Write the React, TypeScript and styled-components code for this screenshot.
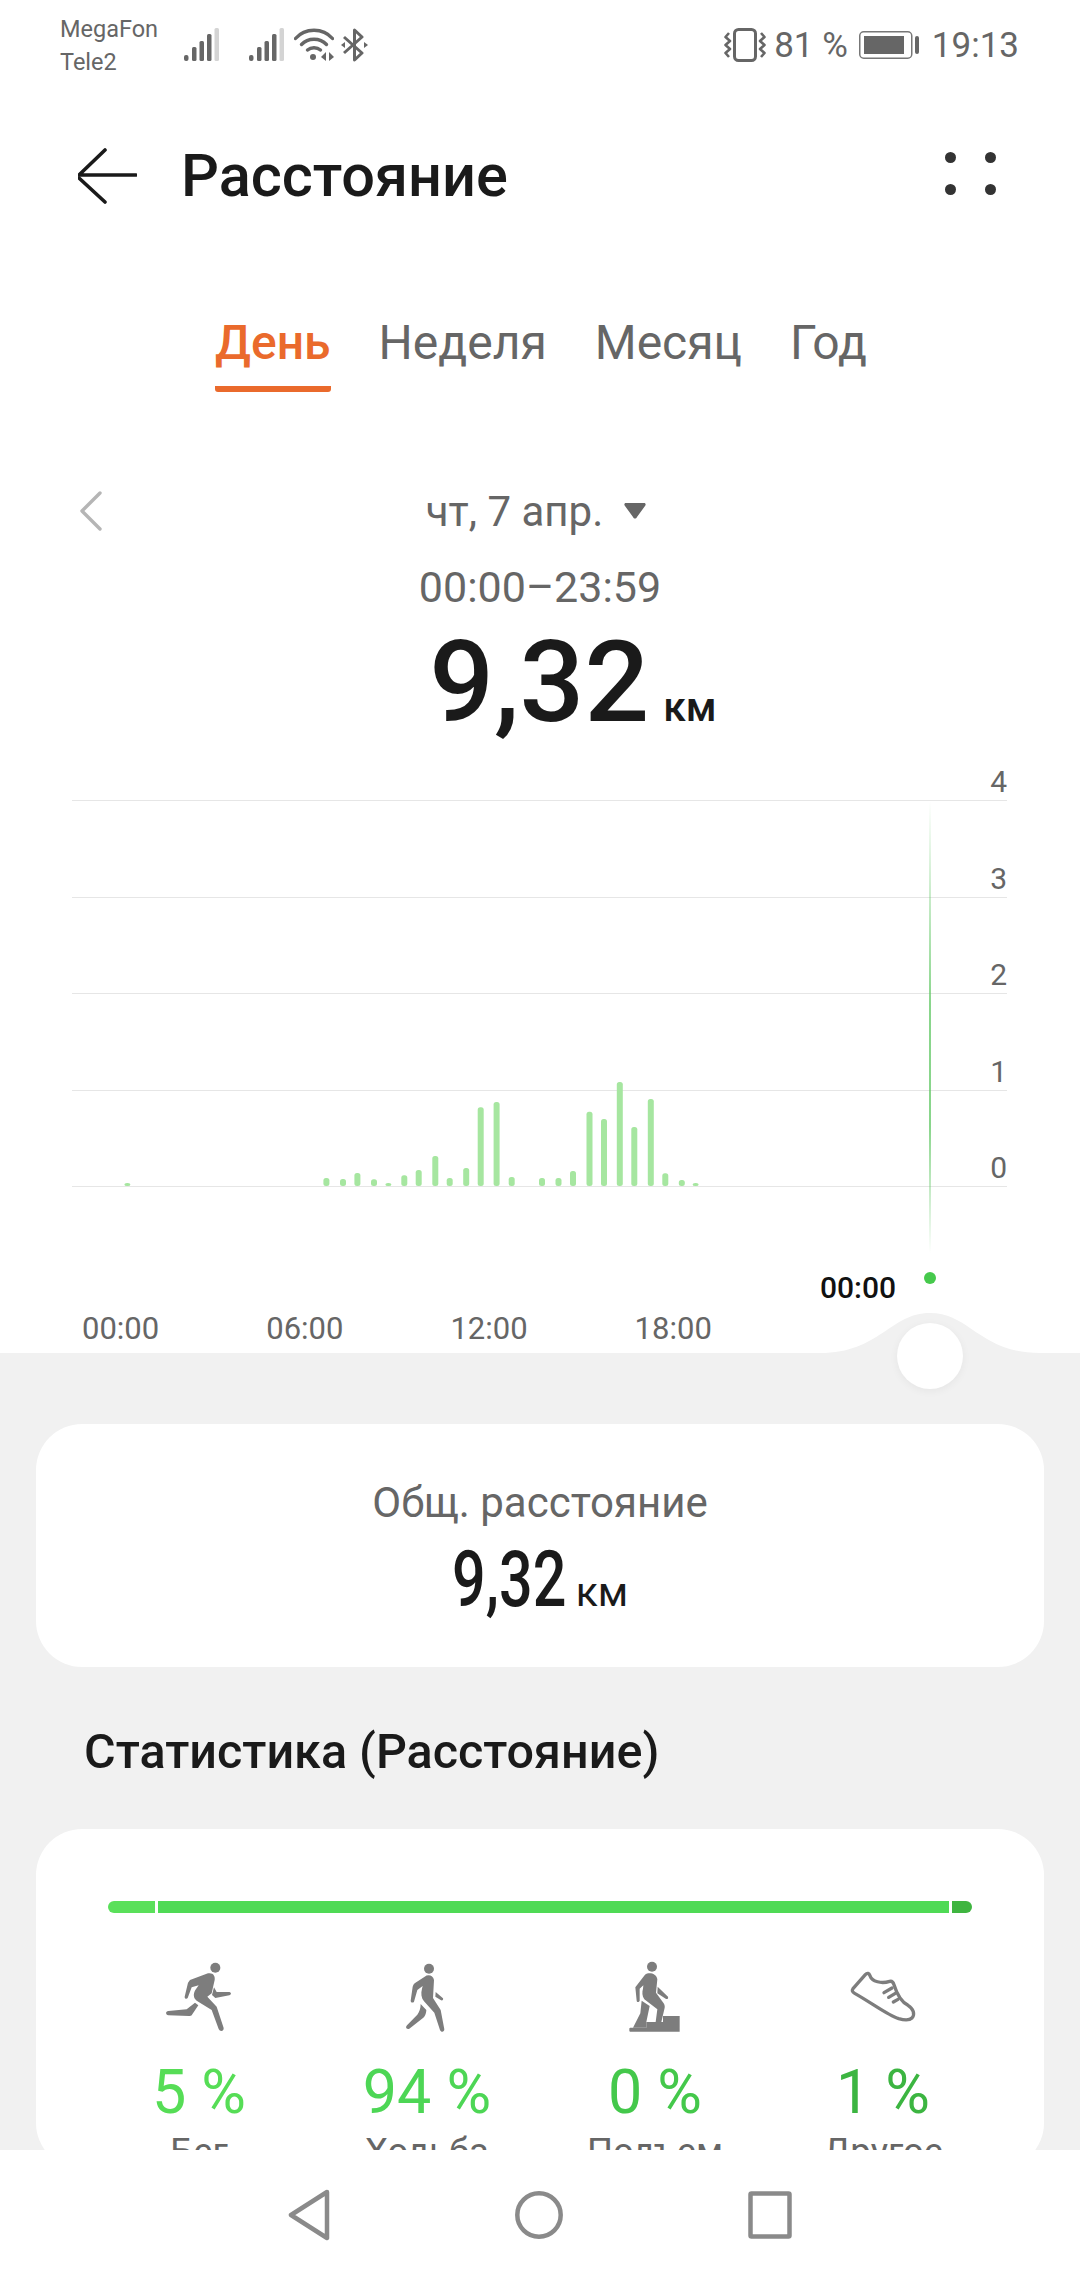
import React from 'react';
import styled, { createGlobalStyle } from 'styled-components';

const GlobalStyle = createGlobalStyle`
  html, body {
    margin: 0;
    padding: 0;
    background: #fff;
    font-family: Roboto, "Noto Sans", sans-serif;
  }
`;

const Screen = styled.div`
  width: 1080px;
  height: 2280px;
  display: flex;
  flex-direction: column;
  overflow: hidden;
  background: #f1f1f1;
`;

const Scroll = styled.div`
  flex: 1;
  min-height: 0;
  overflow: hidden;
`;

const Top = styled.div`
  position: relative;
  height: 1353px;
  background: #fff;
  display: flex;
  flex-direction: column;
`;

const StatusBar = styled.div`
  height: 84px;
  box-sizing: border-box;
  padding: 13px 61px 0 60px;
  display: flex;
  align-items: flex-start;
  color: #666;
`;

const Carrier = styled.div`
  width: 124px;
  font-size: 23.5px;
  line-height: 33px;
`;

const StatusIcons = styled.div`
  display: flex;
  align-items: center;
  height: 34px;
  margin-top: 15px;
`;

const IconSlot = styled.span<{ $left?: number }>`
  display: flex;
  margin-left: ${(p) => p.$left ?? 0}px;
`;

const StatusRight = styled.div`
  margin-left: auto;
  display: flex;
  align-items: center;
  height: 34px;
  margin-top: 15px;
  font-size: 35px;
`;

const BatteryText = styled.span`
  margin: 0 11px 0 8px;
`;

const Clock = styled.span`
  margin-left: 13px;
`;

const Header = styled.div`
  height: 184px;
  box-sizing: border-box;
  padding: 0 78px;
  display: flex;
  align-items: center;
`;

const Title = styled.h1`
  margin: 0 0 0 44px;
  font-size: 59.5px;
  font-weight: 500;
  color: #1a1a1a;
`;

const MenuDots = styled.svg`
  margin: -6px 6px 0 auto;
`;

const Tabs = styled.div`
  height: 124px;
  display: flex;
  justify-content: center;
  gap: 48px;
  padding: 47px 0 0 2px;
  box-sizing: border-box;
`;

const Tab = styled.div<{ $active?: boolean }>`
  height: 77px;
  box-sizing: border-box;
  font-size: 48px;
  line-height: 56px;
  font-weight: ${(p) => (p.$active ? 500 : 400)};
  color: ${(p) => (p.$active ? '#ea6a2c' : '#666')};
  border-bottom: 6px solid ${(p) => (p.$active ? '#ea6a2c' : 'transparent')};
  border-radius: 0 0 3px 3px;
`;

const DateRow = styled.div`
  margin-top: 92px;
  height: 54px;
  padding: 0 80px;
  display: grid;
  grid-template-columns: 1fr auto 1fr;
  align-items: center;
`;

const DateLabel = styled.div`
  display: flex;
  align-items: center;
  gap: 21px;
  margin-left: -8px;
  font-size: 42px;
  color: #666;
`;

const Range = styled.div`
  margin-top: 24px;
  font-size: 43px;
  line-height: 50px;
  color: #666;
  text-align: center;
`;

const Value = styled.div`
  height: 120px;
  display: flex;
  justify-content: center;
  align-items: baseline;
  gap: 14px;
  margin-top: 10px;
  padding-left: 66px;
  color: #1a1a1a;
  font-weight: 500;
  line-height: 120px;
`;

const ValueNumber = styled.span`
  font-size: 114px;
`;

const ValueUnit = styled.span`
  font-size: 41px;
`;

const Chart = styled.div`
  position: relative;
  flex: 1;
  margin-top: 13px;
  padding: 0 73px 0 72px;
  display: flex;
  flex-direction: column;
`;

const GridRow = styled.div<{ $first?: boolean }>`
  height: ${(p) => (p.$first ? 46 : 96.5)}px;
  box-sizing: border-box;
  border-bottom: 1.5px solid #e6e6e6;
  display: flex;
  justify-content: flex-end;
  align-items: flex-end;
  font-size: 30px;
  line-height: 36px;
  color: #666;
`;

const ChartDrawing = styled.svg`
  position: absolute;
  left: 0;
  top: 0;
`;

const CursorTime = styled.div`
  position: absolute;
  left: 820px;
  top: 515px;
  font-size: 30px;
  line-height: 36px;
  font-weight: 500;
  color: #111;
`;

const XAxis = styled.div`
  margin-top: auto;
  height: 42px;
  display: flex;
  padding-left: 10px;
  gap: 107px;
  font-size: 31px;
  line-height: 36px;
  color: #666;
`;

const Bump = styled.svg`
  position: absolute;
  left: 0;
  bottom: 0;
`;

const Thumb = styled.div`
  position: absolute;
  left: 897px;
  top: 1323px;
  width: 66px;
  height: 66px;
  border-radius: 50%;
  background: #fff;
  box-shadow: 0 2px 8px rgba(0, 0, 0, 0.05);
`;

const Bottom = styled.div`
  padding: 71px 36px 0;
`;

const Card = styled.div`
  background: #fff;
  border-radius: 46px;
`;

const SummaryCard = styled(Card)`
  height: 243px;
  box-sizing: border-box;
  padding-top: 54px;
  text-align: center;
`;

const SummaryLabel = styled.div`
  font-size: 42px;
  line-height: 50px;
  color: #666;
`;

const SummaryValue = styled.div`
  margin-top: 12px;
  display: flex;
  justify-content: center;
  align-items: baseline;
  gap: 12px;
  color: #1a1a1a;
`;

const SummaryNumber = styled.span`
  display: inline-block;
  font-size: 78px;
  line-height: 80px;
  font-weight: 500;
  width: 112px;
  transform: scaleX(0.76);
  transform-origin: left center;
  white-space: nowrap;
`;

const SummaryUnit = styled.span`
  font-size: 41px;
`;

const SectionTitle = styled.h2`
  margin: 58px 0 50px 48px;
  font-size: 48.5px;
  line-height: 54px;
  font-weight: 500;
  color: #1a1a1a;
`;

const StatsCard = styled(Card)`
  height: 340px;
  padding: 72px 72px 0;
  box-sizing: border-box;
`;

const Bar = styled.div`
  height: 12px;
  display: flex;
  gap: 3px;
  border-radius: 6px;
  overflow: hidden;
`;

const BarPart = styled.div<{ $color: string; $size: number }>`
  width: ${(p) => p.$size}px;
  background: ${(p) => p.$color};
  flex: ${(p) => (p.$size > 100 ? 1 : 'none')};
`;

const Stats = styled.div`
  margin: 47px -36px 0 -23px;
  display: grid;
  grid-template-columns: repeat(4, 228px);
`;

const Stat = styled.div`
  display: flex;
  flex-direction: column;
  align-items: center;
`;

const StatIcon = styled.svg`
  display: block;
`;

const Percent = styled.div<{ $color: string }>`
  margin-top: 24px;
  font-size: 61px;
  line-height: 68px;
  color: ${(p) => p.$color};
`;

const StatName = styled.div`
  margin-top: 6px;
  font-size: 36.5px;
  line-height: 40px;
  color: #666;
`;

const NavBar = styled.div`
  height: 130px;
  flex: none;
  background: #fff;
  display: flex;
  justify-content: center;
  align-items: center;
  gap: 185px;
`;

const bars = [
  [127.4, 3], [326.4, 8], [343, 7], [357.4, 13], [374, 6.7], [388.4, 3], [404.3, 10.7], [418.7, 16],
  [435.3, 30], [449.7, 8], [466.2, 18], [480.7, 78.7], [496.6, 84], [511.7, 9], [542, 8], [558.5, 8],
  [573, 15], [589.5, 74.3], [604, 67], [619.8, 104], [634.3, 59], [650.8, 87], [665.3, 12.7], [681.8, 6],
  [695.6, 3],
];

function SignalIcon() {
  return (
    <svg width="35" height="34" viewBox="0 0 35 34">
      <rect x="0" y="27" width="4.5" height="6" rx="2" fill="#666" />
      <rect x="8" y="19" width="4.5" height="14" rx="1.5" fill="#666" />
      <rect x="15.5" y="13" width="4.5" height="20" rx="1.5" fill="#666" />
      <rect x="23" y="6" width="4.5" height="27" rx="1.5" fill="#666" />
      <rect x="30.5" y="0" width="4.5" height="33" rx="1.5" fill="#d4d4d4" />
    </svg>
  );
}

function WifiIcon() {
  return (
    <svg width="40" height="34" viewBox="0 0 40 34" fill="none" stroke="#666" strokeWidth="3.4" strokeLinecap="round">
      <path d="M1.5 10.5 C11 -0.5 29 -0.5 38.5 10.5" />
      <path d="M7.5 16.5 C14 9.5 26 9.5 32.5 16.5" />
      <path d="M13.5 22 C17 19 23 19 26.5 22" />
      <circle cx="19" cy="29" r="3" fill="#666" stroke="none" />
      <path d="M32 24 L27 29 L32 33 Z" fill="#666" stroke="none" />
      <path d="M35 24 L40 29 L35 33 Z" fill="#666" stroke="none" />
    </svg>
  );
}

function BluetoothIcon() {
  return (
    <svg width="27" height="34" viewBox="0 0 27 34" fill="none" stroke="#666" strokeWidth="3" strokeLinejoin="round">
      <path d="M3 9 L21 25 L13.5 32 L13.5 2 L21 9 L3 25" />
      <path d="M0 17 L4 14 L4 20 Z" fill="#666" stroke="none" />
      <path d="M27 17 L23 14 L23 20 Z" fill="#666" stroke="none" />
    </svg>
  );
}

function VibrateIcon() {
  return (
    <svg width="42" height="34" viewBox="0 0 42 34" fill="none" stroke="#666" strokeLinejoin="round">
      <rect x="10.5" y="1.5" width="21" height="31" rx="4" strokeWidth="3" />
      <path d="M5 5 L1.5 9 L6 13 L1.5 17 L6 21 L1.5 25 L5 29" strokeWidth="2.6" />
      <path d="M37 5 L40.5 9 L36 13 L40.5 17 L36 21 L40.5 25 L37 29" strokeWidth="2.6" />
    </svg>
  );
}

function BatteryIcon() {
  return (
    <svg width="60" height="28" viewBox="0 0 60 28">
      <rect x="0.75" y="0.75" width="52" height="26.5" rx="4" fill="none" stroke="#777" strokeWidth="1.5" />
      <rect x="5" y="5" width="40" height="18" fill="#666" />
      <rect x="56" y="5" width="4" height="18" rx="2" fill="#666" />
    </svg>
  );
}

function RunIcon() {
  return (
    <StatIcon width="70" height="74" viewBox="100 90 210 222" fill="#7d7d7d">
      <circle cx="254" cy="113" r="15" />
      <path d="M178 150 L232 130 C246 127 254 136 252 150 L243 190 L230 200 L258 230 L279 294 C280 304 268 306 264 297 L243 240 L198 212 C188 204 187 192 194 180 L204 166 L183 172 L171 204 C168 208 161 206 162 200 L172 158 Z" />
      <path d="M193 218 L203 226 L184 254 C182 257 179 258 175 258 L113 256 C104 254 104 244 113 243 L168 238 Z" />
      <path d="M250 172 L258 186 L296 186 C303 188 302 194 296 196 L254 204 L244 195 Z" />
    </StatIcon>
  );
}

function WalkIcon() {
  return (
    <StatIcon width="70" height="74" viewBox="790 90 210 222" fill="#7d7d7d">
      <circle cx="901" cy="116" r="15" />
      <path d="M888 140 C898 132 914 136 916 150 L913 204 L936 240 L947 298 C947 307 937 308 934 300 L917 248 L886 214 C878 204 876 190 880 176 L882 168 L866 180 L856 215 C853 220 846 218 846 212 L852 170 C853 166 855 163 858 160 Z" />
      <path d="M876 222 L893 240 C892 254 888 260 882 265 L842 296 C834 300 829 292 835 286 L866 254 C872 246 876 236 876 222 Z" />
      <path d="M921 186 L943 205 C945 210 940 213 936 210 L920 200 Z" />
    </StatIcon>
  );
}

function ClimbIcon() {
  return (
    <StatIcon width="70" height="74" viewBox="179 90 210 222" fill="#7d7d7d">
      <circle cx="275" cy="110" r="15" />
      <path d="M254 134 C266 126 288 130 291 148 L287 188 L310 220 C314 226 314 232 312 238 L303 276 L286 276 L291 238 L252 208 C245 198 245 186 248 176 L249 166 L238 176 L238 212 C236 218 229 217 229 212 L225 172 Z" />
      <path d="M244 212 L268 228 L258 276 L258 293 L218 293 L240 250 Z" />
      <path d="M292 170 L323 200 C325 206 320 209 316 206 L291 190 Z" />
      <path d="M207 296 C207 294 209 293 211 293 L258 293 L258 276 L308 276 L308 258 L358 258 L358 305 L211 305 C209 305 207 304 207 302 Z" />
    </StatIcon>
  );
}

function ShoeIcon() {
  return (
    <StatIcon width="70" height="74" viewBox="860 90 210 222" fill="none" stroke="#7d7d7d" strokeWidth="10" strokeLinecap="round" strokeLinejoin="round">
      <path d="M875 176 L912 134 C918 127 923 130 926 137 C932 155 960 162 985 154 C992 152 996 158 998 164 C1006 190 1018 214 1040 226 C1056 236 1062 252 1052 264 C1044 272 1026 270 1012 266 C980 256 930 218 880 190 C873 186 871 182 875 176 Z" />
      <path d="M968 188 L992 174" />
      <path d="M982 202 L1002 190" />
      <path d="M996 216 L1010 208" />
    </StatIcon>
  );
}

export default function App() {
  return (
    <>
      <GlobalStyle />
      <Screen>
        <Scroll>
          <Top>
            <StatusBar>
              <Carrier>
                MegaFon
                <br />
                Tele2
              </Carrier>
              <StatusIcons>
                <IconSlot><SignalIcon /></IconSlot>
                <IconSlot $left={30}><SignalIcon /></IconSlot>
                <IconSlot $left={10}><WifiIcon /></IconSlot>
                <IconSlot $left={7}><BluetoothIcon /></IconSlot>
              </StatusIcons>
              <StatusRight>
                <VibrateIcon />
                <BatteryText>81 %</BatteryText>
                <BatteryIcon />
                <Clock>19:13</Clock>
              </StatusRight>
            </StatusBar>

            <Header>
              <svg width="59" height="56" viewBox="0 0 59 56" fill="none" stroke="#1a1a1a" strokeWidth="3.6" strokeLinecap="round" strokeLinejoin="round">
                <path d="M27 2 L1 27 L58 27" />
                <path d="M1 30 L27 54" />
              </svg>
              <Title>Расстояние</Title>
              <MenuDots width="51" height="43" viewBox="0 0 51 43" fill="#333">
                <circle cx="5.5" cy="5.5" r="5.5" />
                <circle cx="45.5" cy="5.5" r="5.5" />
                <circle cx="5.5" cy="37.5" r="5.5" />
                <circle cx="45.5" cy="37.5" r="5.5" />
              </MenuDots>
            </Header>

            <Tabs>
              <Tab $active>День</Tab>
              <Tab>Неделя</Tab>
              <Tab>Месяц</Tab>
              <Tab>Год</Tab>
            </Tabs>

            <DateRow>
              <svg width="22" height="40" viewBox="0 0 22 40" fill="none" stroke="#b5b5b5" strokeWidth="3.4" strokeLinecap="round" strokeLinejoin="round">
                <path d="M20 2 L2 20 L20 38" />
              </svg>
              <DateLabel>
                чт, 7 апр.
                <svg width="22" height="16" viewBox="0 0 22 16" fill="#666">
                  <path d="M2 0 L20 0 C22 0 22 2 21 3 L13 14 C12 16 10 16 9 14 L1 3 C0 2 0 0 2 0 Z" />
                </svg>
              </DateLabel>
              <div />
            </DateRow>

            <Range>00:00–23:59</Range>

            <Value>
              <ValueNumber>9,32</ValueNumber>
              <ValueUnit>км</ValueUnit>
            </Value>

            <Chart>
              <GridRow $first>4</GridRow>
              <GridRow>3</GridRow>
              <GridRow>2</GridRow>
              <GridRow>1</GridRow>
              <GridRow>0</GridRow>
              <XAxis>
                <span>00:00</span>
                <span>06:00</span>
                <span>12:00</span>
                <span>18:00</span>
              </XAxis>
              <ChartDrawing width="1080" height="560" viewBox="0 0 1080 560">
                <defs>
                  <linearGradient id="cursor" x1="0" y1="0" x2="0" y2="1">
                    <stop offset="0" stopColor="#63c866" stopOpacity="0" />
                    <stop offset="0.45" stopColor="#63c866" />
                    <stop offset="0.72" stopColor="#63c866" />
                    <stop offset="1" stopColor="#63c866" stopOpacity="0" />
                  </linearGradient>
                </defs>
                {bars.map(([x, h]) => (
                  <rect key={x} x={x - 3} y={431 - h} width="6" height={h} rx="2.5" fill="#a6e6a0" />
                ))}
                <rect x="929.25" y="46" width="1.5" height="452" fill="url(#cursor)" />
                <circle cx="930" cy="523" r="6" fill="#46c94c" />
              </ChartDrawing>
              <CursorTime>00:00</CursorTime>
            </Chart>

            <Bump width="1080" height="40" viewBox="0 0 1080 40">
              <path d="M820 40 C880 40 890 0 930 0 C970 0 980 40 1040 40 Z" fill="#f1f1f1" />
            </Bump>
            <Thumb />
          </Top>

          <Bottom>
            <SummaryCard>
              <SummaryLabel>Общ. расстояние</SummaryLabel>
              <SummaryValue>
                <SummaryNumber>9,32</SummaryNumber>
                <SummaryUnit>км</SummaryUnit>
              </SummaryValue>
            </SummaryCard>

            <SectionTitle>Статистика (Расстояние)</SectionTitle>

            <StatsCard>
              <Bar>
                <BarPart $color="#5ae05a" $size={47} />
                <BarPart $color="#4fda55" $size={792} />
                <BarPart $color="#3fb540" $size={20} />
              </Bar>
              <Stats>
                <Stat>
                  <RunIcon />
                  <Percent $color="#56dd56">5 %</Percent>
                  <StatName>Бег</StatName>
                </Stat>
                <Stat>
                  <WalkIcon />
                  <Percent $color="#4dd655">94 %</Percent>
                  <StatName>Ходьба</StatName>
                </Stat>
                <Stat>
                  <ClimbIcon />
                  <Percent $color="#44c84b">0 %</Percent>
                  <StatName>Подъем</StatName>
                </Stat>
                <Stat>
                  <ShoeIcon />
                  <Percent $color="#3cb541">1 %</Percent>
                  <StatName>Другое</StatName>
                </Stat>
              </Stats>
            </StatsCard>
          </Bottom>
        </Scroll>

        <NavBar>
          <svg width="42" height="52" viewBox="0 0 42 52" fill="none" stroke="#8a8a8a" strokeWidth="4.5" strokeLinejoin="round">
            <path d="M39 3 L3 26 L39 49 Z" />
          </svg>
          <svg width="48" height="50" viewBox="0 0 48 50" fill="none" stroke="#8a8a8a" strokeWidth="4.5">
            <circle cx="24" cy="25" r="21.7" />
          </svg>
          <svg width="44" height="48" viewBox="0 0 44 48" fill="none" stroke="#8a8a8a" strokeWidth="4.5" strokeLinejoin="round">
            <rect x="2.5" y="2.5" width="39" height="43" rx="1" />
          </svg>
        </NavBar>
      </Screen>
    </>
  );
}
